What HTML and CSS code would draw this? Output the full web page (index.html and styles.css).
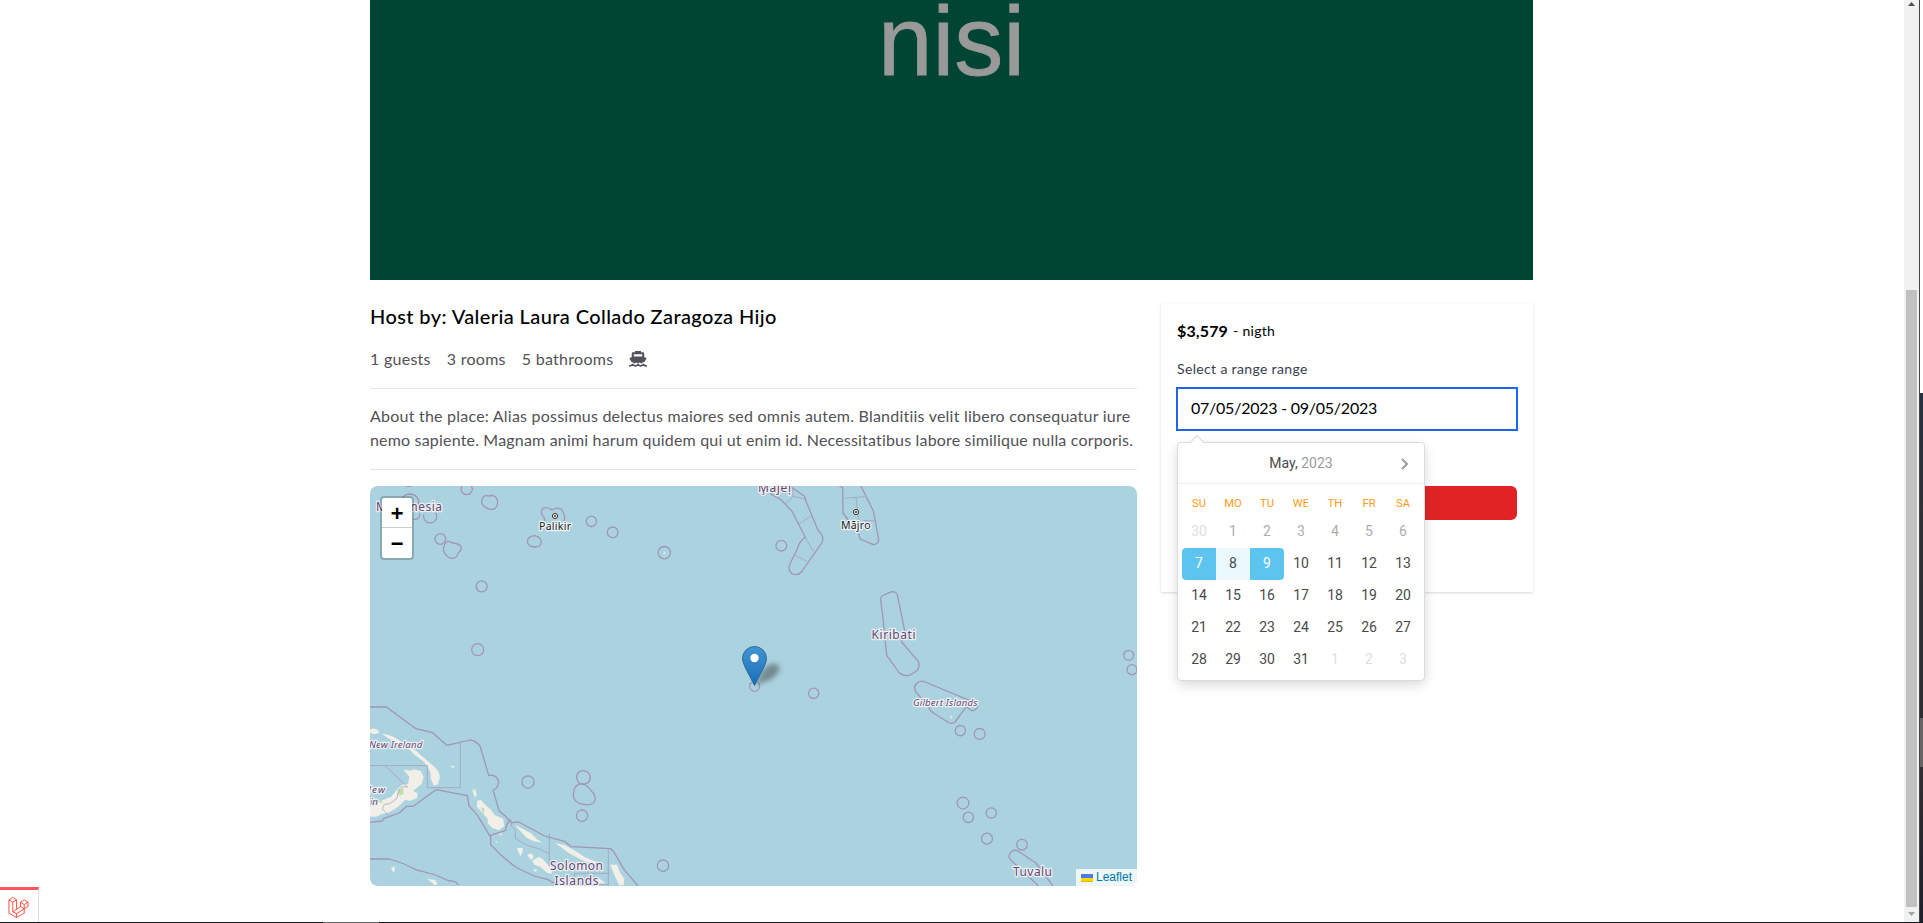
FILE: index.html
```html
<!DOCTYPE html>
<html lang="en">
<head>
<meta charset="utf-8">
<title>Listing</title>
<link rel="stylesheet" href="styles.css">
</head>
<body>
<div class="screen">
  <div class="page">
    <div class="hero"><span class="hero-word">nisi</span></div>
    <div class="columns">
      <section class="details">
        <h1 class="host">Host by: Valeria Laura Collado Zaragoza Hijo</h1>
        <div class="facts">
          <span>1 guests</span><span>3 rooms</span><span>5 bathrooms</span>
          <svg class="ship" viewBox="0 0 18 16"><path fill="#52525b" fill-rule="evenodd" d="M6 0h6v1.200h2.200q1 0 1 1V6l2 .9q.6.3.2.9l-2.100 3.500q-1.200 0-2.300-.9-2 1.400-4 0-2 1.400-4 0-1 .9-2.300.9L.6 7.800q-.3-.6.2-.9l2-.9V2.200q0-1 1-1H6zM4.800 3.200v2.200h8.400V3.200z"/><path d="M5 9.500h8l1 2.200-1.500.8-2-.9-1.500.9-1.500-.9-2 .9-1.500-.8z" fill="#52525b"/><path fill="none" stroke="#52525b" stroke-width="1.700" d="M0 15q1.500 0 2.600-.7l1-.7q1.300 1.200 2.700 1.200T9 13.600q1.300 1.200 2.700 1.200t2.700-1.200q1.300 1.400 3.600 1.400"/></svg>
        </div>
        <p class="about"><span class="first">About the place: Alias possimus delectus maiores sed omnis autem. Blanditiis velit libero consequatur iure</span><br>nemo sapiente. Magnam animi harum quidem qui ut enim id. Necessitatibus labore similique nulla corporis.</p>
        <div class="map">
          <svg class="chart" viewBox="0 0 767 400">
            <defs>
              <linearGradient id="pin" x1="0" y1="0" x2="0" y2="1"><stop offset="0" stop-color="#4295d1"/><stop offset="1" stop-color="#1a6dbd"/></linearGradient>
              <filter id="soft" x="-40%" y="-40%" width="180%" height="180%"><feGaussianBlur stdDeviation="2.800"/></filter>
            </defs>
            <rect width="767" height="400" fill="#aad3df"/>
            <!-- north-west -->
            <g class="sea" transform="translate(-5 -6) scale(.33333)">
              <path d="M122 17q10 4 20 0M114 58q-2-14 20-16 20 0 27 20l-2 18M145 118q20 2 19-18M176 104q-3 16 13 24 14 3 22-6 8-10 1-24"/>
              <circle cx="305" cy="27" r="17"/>
              <path d="M364 46q-16 4-14 24 10 16 30 19 18-3 18-24-2-17-18-19-8 4-16 0z"/>
              <circle cx="226" cy="177" r="16"/>
              <path d="M248 184q-12 8-13 26 8 24 28 25 14-1 16-16 14-10 8-22-10-8-24-8-8-6-15-5z"/>
              <path d="M538 124q3-10-4-16-8-8-3-20 10-10 26-1 6 6 9 0 10-5 22 0 14 16 10 36"/>
              <circle cx="679" cy="124" r="15.500"/><circle cx="743" cy="157" r="16"/>
              <path d="M508 167q-20 2-21 18 2 16 24 16 17 0 18-16-2-14-21-18z"/>
              <circle cx="898" cy="218" r="18.500"/><path class="land" d="M893 221l8-6v7z"/>
              <circle cx="350" cy="319" r="16.500"/><circle cx="338" cy="509" r="18"/>
            </g>
            <!-- south-west -->
            <g class="sea" transform="translate(-5 194) scale(.33333)">
              <path class="land" d="M15 148q12-6 24 2l4 8-14 5-14-5zM50 160l30 8 22 12 26 20 22 10 16 14 14 12 14 12 12 10 14 16 5 18-6 20-12 6-10-22 0-16-8-18-14-18-22-16-22-22-36-16-30-18zM116 268l18 4 14-4 20 6 8 18-6 20-26 20 14 8-2 14-20 8-16-2-20 20-30 18-20 4-16 8H15v-36l24-8 40-16 18-22 16-14 16-2 4-22-12-14zM322 330l8-6 4 14v14l-6-4zM336 362l12-2 10 12 18 16 14 18 24 10 4 22-16 12-20-6-14-14v-14l-18-20-14-16zM450 434l18 10 30 16 18 18 16 10-26-4-20-10-14-14zM570 488l30 8 30 16 30 20 40 16-10 6-40-14-40-22zM456 504h18l-2 14-6 10-6-12zM486 524l14-4 6 12-8 8zM502 542l20-12 14 10 12 14 14 8-2 20-14-4-20-18-18-6zM736 554h20l8 22 14 20-2 20h-14l-16-36zM690 590l20 10 12 12-20-2zM186 596l24 4 8 12-8 4zM78 565l10-6 2 10-4 10zM400 460l12 2-3 5zM256 260l12-4-2 8zM504 566l14 4-8 6zM390 484h6v5z"/>
              <path class="green" d="M98 330l18-6v18l-14 6zM348 382l10 2-2 22zM322 328l8-2v8zM42 360l14 6-10 4zM188 190l5 2-2 8zM525 580l10 2-8 3z"/>
              <path class="thin" d="M15 257H187V323H286V188M60 257l68 64M128 321q-24-4-28 14l-4 20-22 16-16 2-6 14 22 22M437 420l2 18 12 12v26l36 20 40 12 25 13M553 462V560M730 508V618M628 580H730M628 580v14M700 613h30"/>
              <path d="M15 81H64L153 146l50 12 42 38 70-16q14 0 30 18l26 88q24-4 30 20-2 20-17 24l19 64 18 14 18 20 22-2 78 42 60 16 20 16 116 6q8 2 14 14l28 48 50 60M15 427l36-4 6-8 46-16 22-20h20l68-50 94 18 5 30 26 30 36 60 48-16q2-24 16-32M377 464v30q36 40 80 70l50 24 40 10 22 12M15 537H72q40 10 80 32l60 16 40 18q22-2 28 13"/>
              <circle cx="489" cy="306" r="18.500"/>
              <path d="M641 308q-12-18 0-32 16-10 30 3 10 16-1 28l-8 4q-10 6-21-3zM641 313q-16 6-16 36 6 22 30 24 30 6 36-14 0-14-10-24-12-16-24-23-8-3-16 1z"/>
              <circle cx="651" cy="407" r="17"/><circle cx="894" cy="557" r="17"/>
            </g>
            <!-- north-east -->
            <g class="sea" transform="translate(380 -6) scale(.33333)">
              <path class="thin" d="M106 72l24-23 38 9M130 49l-2-22M146 132l40-26M166 172l24 42M136 226l34 18M284 55l60-5M318 52l8 70M340 122h34"/>
              <path d="M60 40l34 20 32 34 40 78q-18 12-24 34l-24 50q-4 18 10 26 16 6 26-6l60-85q12-20-10-40l-37-90q0-14-12-18L118 17M268 17l10 6 1 76 18 24M332 17l38 76 16 84q0 16-16 17l-40-17-4-16"/>
              <circle cx="94" cy="197" r="16"/>
              <path d="M392 358q0-10 10-13 14-6 24-10 14 0 16 10l22 107-9 34 50 58q6 16-4 28-12 8-24 14-18 4-31-10l-36-50-11-110z"/>
              <circle cx="1136" cy="526" r="15"/><circle cx="1146" cy="569" r="15"/>
            </g>
            <!-- south-east -->
            <g class="sea" transform="translate(380 194) scale(.33333)">
              <circle cx="14" cy="19" r="15"/><circle cx="191" cy="40" r="15.500"/>
              <path d="M498 36q-10-16 4-28 10-8 24-2l132 55q24 6 25 18-6 14-18 13l-16-12-34 46q-10 8-22 0l-44-28q-8-4-14-18z"/>
              <path class="land" d="M600 104l8 9-5 3z"/>
              <circle cx="631" cy="152" r="15.500"/><circle cx="689" cy="162" r="16.500"/><circle cx="639" cy="369" r="17.500"/><circle cx="655" cy="412" r="15.500"/><circle cx="724" cy="399" r="15.500"/><circle cx="711" cy="476" r="16.500"/><circle cx="816" cy="494" r="16"/>
              <path d="M866 618l-84-78q-12-14 4-26 8-6 18-1l54 36 52 70"/>
            </g>
            <g class="names">
              <text x="6" y="25" textLength="66">Micronesia</text>
              <text x="388" y="6" textLength="33">M̧ajeļ</text>
              <text x="501.500" y="152.500" textLength="44">Kiribati</text>
              <text x="643" y="390" textLength="39">Tuvalu</text>
              <text x="180" y="384" textLength="53">Solomon</text>
              <text x="184.500" y="399" textLength="44">Islands</text>
              <text class="slant" x="-1" y="262" textLength="53.500">New Ireland</text>
              <text class="slant" x="-6" y="306.500" textLength="21">New</text>
              <text class="slant" x="-18" y="318.500" textLength="26">Britain</text>
              <text class="slant" x="543" y="220" textLength="64.500">Gilbert Islands</text>
              <text class="city" x="169" y="44" textLength="32">Palikir</text>
              <text class="city" x="471" y="43" textLength="29.500">Mājro</text>
            </g>
            <g fill="#f5f1e0" stroke="#333"><circle cx="185" cy="30" r="2.600"/><circle cx="486" cy="26" r="2.600"/></g>
            <circle cx="185" cy="30" r="1" fill="#333"/><circle cx="486" cy="26" r="1" fill="#333"/>
            <path d="M385 199l8-15q8-9 15-5 5 6-8 15z" fill="#333" opacity=".45" filter="url(#soft)"/>
            <path d="M384.500 199.500l-9-17.500q-3-6-3-9.500a12 12 0 0 1 24 0q0 3.500-3 9.500z" fill="url(#pin)" stroke="#2e6c97"/>
            <circle cx="384.500" cy="172" r="4.200" fill="#fff"/>
          </svg>
          <div class="zoom"><span class="zoom-in">+</span><span>−</span></div>
          <div class="credit"><svg class="flag" viewBox="0 0 12 8"><path fill="#4c7be1" d="M0 0h12v4H0z"/><path fill="#ffd500" d="M0 4h12v3H0z"/><path fill="#e0bc00" d="M0 7h12v1H0z"/></svg><span>Leaflet</span></div>
        </div>
      </section>
      <aside class="booking">
        <div class="price"><b class="amount">$3,579</b><span class="unit">- nigth</span></div>
        <div class="label">Select a range range</div>
        <div class="field"><span>07/05/2023 - 09/05/2023</span></div>
        <div class="reserve"></div>
        <div class="picker">
          <i class="pointer"></i>
          <div class="picker-head"><span>May, <em>2023</em></span><svg class="next" viewBox="0 0 8 12"><path d="M1 1l5 5-5 5" fill="none" stroke="#9c9c9c" stroke-width="2"/></svg></div>
          <div class="grid week"><span>SU</span><span>MO</span><span>TU</span><span>WE</span><span>TH</span><span>FR</span><span>SA</span></div>
          <div class="grid days">
            <span class="other">30</span><span class="off">1</span><span class="off">2</span><span class="off">3</span><span class="off">4</span><span class="off">5</span><span class="off">6</span>
            <span class="from">7</span><span class="in">8</span><span class="to">9</span><span>10</span><span>11</span><span>12</span><span>13</span>
            <span>14</span><span>15</span><span>16</span><span>17</span><span>18</span><span>19</span><span>20</span>
            <span>21</span><span>22</span><span>23</span><span>24</span><span>25</span><span>26</span><span>27</span>
            <span>28</span><span>29</span><span>30</span><span>31</span><span class="other">1</span><span class="other">2</span><span class="other">3</span>
          </div>
        </div>
      </aside>
    </div>
    <div class="debug"><svg class="laravel" viewBox="0 0 22 22"><path d="M1 3.500L5 1l4 2.500v10l4-2.500V6l4-2.500L21 6v4.500l-4 2.500v4.500L9 22l-8-4.500zM1 3.500L5 6l4-2.500M5 6v10l4 2 8-5M5 16l4-2.500M9 18v4M13 6l4 2.500L21 6M17 8.500V13l-4-2.500"/></svg></div>
  </div>
  <div class="scrollbar"><svg viewBox="0 0 7 4"><path fill="#505050" d="M0 4L3.500 0 7 4z"/></svg><div class="thumb"></div><svg viewBox="0 0 7 4"><path fill="#a3a3a3" d="M0 0h7L3.500 4z"/></svg></div>
  <div class="line"></div>
  <div class="desktop"><i class="d1"></i><i class="d2"></i><i class="d3"></i><i class="d4"></i></div>
  <div class="base"><i></i></div>
</div>
</body>
</html>
```
FILE: styles.css
```css
* { box-sizing: border-box; }
body { margin: 0; background: #fff; font-family: Lato, "Open Sans", sans-serif; font-size: 16px; line-height: 24px; color: #000; font-variant-ligatures: none; }
.screen { width: 1923px; height: 923px; overflow: hidden; display: grid; grid-template-columns: 1904px 15px 1px 3px; grid-template-rows: 922px 1px; }
.page { padding-left: 370px; position: relative; }
.hero { width: 1163px; height: 280px; background: #004433; display: flex; justify-content: center; }
.hero-word { font: 98px/100px "Liberation Sans", sans-serif; color: #999; margin-top: -9px; height: 100px; -webkit-text-stroke: .8px #999; }
.columns { width: 1163px; display: flex; justify-content: space-between; padding-top: 22px; }
.details { width: 767px; white-space: nowrap; }
.host { margin: 0; font-size: 20px; line-height: 28px; font-weight: 500; letter-spacing: .4px; }
.facts { display: flex; align-items: center; margin-top: 17px; height: 24px; color: #525256; letter-spacing: .27px; }
.facts span { margin-right: 16px; }
.ship { width: 18px; height: 16px; margin-top: -1px; }
.about { margin: 17px 0 16px; padding: 15px 0; height: 82px; border: solid #e5e7eb; border-width: 1px 0; color: #525256; letter-spacing: .18px; }
.first { letter-spacing: .225px; }
.map { width: 767px; height: 400px; border-radius: 8px; overflow: hidden; position: relative; }
.chart { display: block; width: 767px; height: 400px; }
.sea { fill: none; stroke: #a294b4; stroke-width: 3.8; stroke-linejoin: round; }
.sea .thin { stroke-width: 2; }
.sea .land { fill: #f2efe9; stroke: none; }
.sea .green { fill: #c3dfb0; stroke: none; }
.names { font: 12px "Noto Sans", sans-serif; fill: #6b4470; stroke: #eaf2f5; stroke-width: 2.5px; stroke-linejoin: round; paint-order: stroke; }
.names .slant { font-size: 9.8px; font-style: italic; }
.names .city { font-size: 10.5px; fill: #222; }
.zoom { position: absolute; left: 10px; top: 10px; width: 34px; height: 64px; border: 2px solid rgba(0,0,0,.2); border-radius: 4px; background: #fff; background-clip: padding-box; font: bold 22px/35px "Liberation Mono", monospace; text-align: center; }
.zoom span { display: block; height: 30px; }
.zoom .zoom-in { border-bottom: 1px solid #ccc; }
.credit { position: absolute; right: 0; bottom: 0; width: 61px; height: 17px; background: rgba(255,255,255,.8); display: flex; align-items: center; justify-content: center; gap: 3px; font: 12px/17px "Liberation Sans", sans-serif; color: #0078a8; }
.flag { width: 12px; height: 8px; }
.booking { width: 372px; height: 288px; margin-top: 2px; padding: 15px 16px; box-shadow: 0 1px 3px rgba(0,0,0,.1), 0 1px 2px rgba(0,0,0,.06); position: relative; white-space: nowrap; }
.price { display: flex; gap: 5px; height: 24px; }
.price .amount { font-weight: 700; letter-spacing: .15px; }
.unit { font-size: 14px; letter-spacing: .3px; }
.label { font-size: 14px; line-height: 20px; margin: 16px 0 9px; color: #374151; letter-spacing: .35px; }
.field { height: 42px; border: 1px solid #1c64f2; box-shadow: 0 0 0 1px #1c64f2; display: flex; align-items: center; padding: 0 0 2px 13px; letter-spacing: -.24px; }
.reserve { margin-top: 56px; height: 34px; border-radius: 6px; background: #e02424; }
.picker { position: absolute; left: 16px; top: 138px; width: 248px; height: 239px; background: #fff; border: 1px solid #dbdbdb; border-radius: 4px; box-shadow: 0 4px 12px rgba(0,0,0,.15); font-family: Roboto, sans-serif; font-size: 14px; color: #4a4a4a; }
.pointer { position: absolute; left: 14px; top: -6px; width: 10px; height: 10px; background: #fff; border: solid #dbdbdb; border-width: 1px 0 0 1px; transform: rotate(45deg); }
.picker-head { height: 41px; border-bottom: 1px solid #efefef; display: flex; align-items: center; justify-content: center; position: relative; }
.picker-head em { color: #9c9c9c; font-style: normal; }
.next { position: absolute; right: 15px; top: 15px; width: 8px; height: 12px; }
.grid { display: grid; grid-template-columns: repeat(7, 34px); padding: 0 4px; text-align: center; }
.week { color: #ff9a19; font-size: 11.2px; line-height: 18px; margin: 11px 0 3px; }
.days { grid-auto-rows: 32px; line-height: 31px; }
.other { color: #dedede; }
.off { color: #aeaeae; }
.from { background: #5cc4ef; color: #fff; border-radius: 4px 0 0 4px; }
.to { background: #5cc4ef; color: #fff; border-radius: 0 4px 4px 0; }
.in { background: #ebf8fe; }
.debug { position: absolute; left: 0; bottom: 0; width: 39px; height: 35px; border-top: 3px solid #ff5560; border-right: 1px solid #ddd; padding: 6px 0 0 8px; }
.laravel { display: block; width: 21px; height: 22px; fill: none; stroke: #ff4b3e; stroke-width: 1; stroke-linejoin: round; }
.scrollbar { background: #f1f1f1; display: flex; flex-direction: column; align-items: center; padding: 2px 0 6px; }
.scrollbar svg { width: 7px; height: 4px; }
.thumb { width: 11px; height: 617px; margin: 284px 0 5px; background: #c1c1c1; }
.line { background: #444; }
.desktop { display: flex; flex-direction: column; }
.d1 { height: 393px; background: #fff; }
.d2 { height: 325px; background: linear-gradient(#26303f, #303036 35%, #2e2d2f); }
.d3 { height: 49px; background: #656364; }
.d4 { flex: 1; background: linear-gradient(#322d31, #1d1f2b); }
.base { grid-column: 1 / -1; background: #15151c; }
.base i { display: block; margin-left: 323px; width: 56px; height: 1px; background: #666; }
```
